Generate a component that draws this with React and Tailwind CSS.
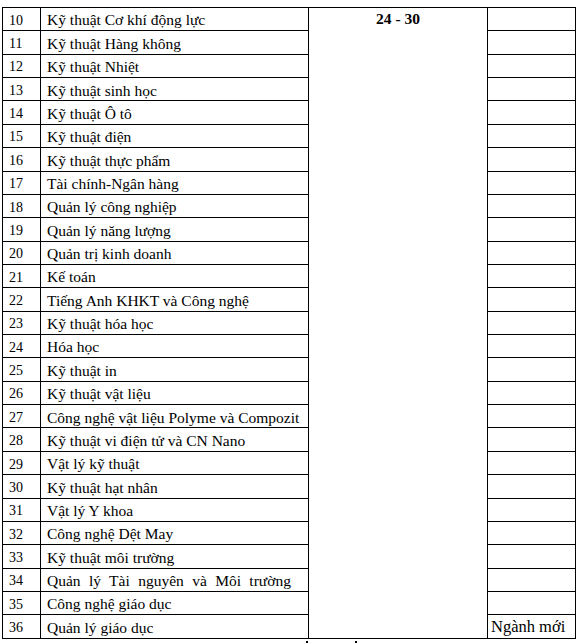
import React from "react";

const rows = [
  [10, "Kỹ thuật Cơ khí động lực"],
  [11, "Kỹ thuật Hàng không"],
  [12, "Kỹ thuật Nhiệt"],
  [13, "Kỹ thuật sinh học"],
  [14, "Kỹ thuật Ô tô"],
  [15, "Kỹ thuật điện"],
  [16, "Kỹ thuật thực phẩm"],
  [17, "Tài chính-Ngân hàng"],
  [18, "Quản lý công nghiệp"],
  [19, "Quản lý năng lượng"],
  [20, "Quản trị kinh doanh"],
  [21, "Kế toán"],
  [22, "Tiếng Anh KHKT và Công nghệ"],
  [23, "Kỹ thuật hóa học"],
  [24, "Hóa học"],
  [25, "Kỹ thuật in"],
  [26, "Kỹ thuật vật liệu"],
  [27, "Công nghệ vật liệu Polyme và Compozit"],
  [28, "Kỹ thuật vi điện tử và CN Nano"],
  [29, "Vật lý kỹ thuật"],
  [30, "Kỹ thuật hạt nhân"],
  [31, "Vật lý Y khoa"],
  [32, "Công nghệ Dệt May"],
  [33, "Kỹ thuật môi trường"],
  [34, "Quản lý Tài nguyên và Môi trường"],
  [35, "Công nghệ giáo dục"],
  [36, "Quản lý giáo dục"],
];

export default function App() {
  return (
    <div className="w-[577px] h-[644px] overflow-hidden bg-white text-black font-['Liberation_Serif','Times_New_Roman',serif] pt-[7px] pl-[2px]">
      <table className="border-collapse table-fixed w-[573px]">
        <colgroup>
          <col className="w-[38px]" />
          <col className="w-[268px]" />
          <col className="w-[179px]" />
          <col className="w-[88px]" />
        </colgroup>
        <tbody>
          {rows.map(([n, name], i) => (
            <tr key={n} className="h-[23.37px]">
              <td className="border border-black pl-[6px] text-[14px] leading-none align-middle pt-[3px]">{n}</td>
              <td
                className={
                  n === 34
                    ? "border border-black pl-[6px] text-[15.5px] leading-none align-middle pt-[2px] whitespace-nowrap [word-spacing:4.5px]"
                    : "border border-black pl-[6px] text-[15.5px] leading-none align-middle pt-[2px] whitespace-nowrap"
                }
              >
                {name}
              </td>
              {i === 0 && (
                <td rowSpan={27} className="border border-black align-top text-center font-bold text-[15.5px] leading-none pt-[3px]">
                  24 - 30
                </td>
              )}
              <td className="border border-black pl-[3px] text-[16.5px] leading-none align-middle pt-[2px] whitespace-nowrap">
                {n === 36 ? "Ngành mới" : ""}
              </td>
            </tr>
          ))}
        </tbody>
      </table>
      <div className="flex h-[4px] items-end">
        <span className="ml-[304px] block w-[2px] h-[2px] bg-black"></span>
        <span className="ml-[47px] block w-[2px] h-[2px] bg-black"></span>
      </div>
    </div>
  );
}
